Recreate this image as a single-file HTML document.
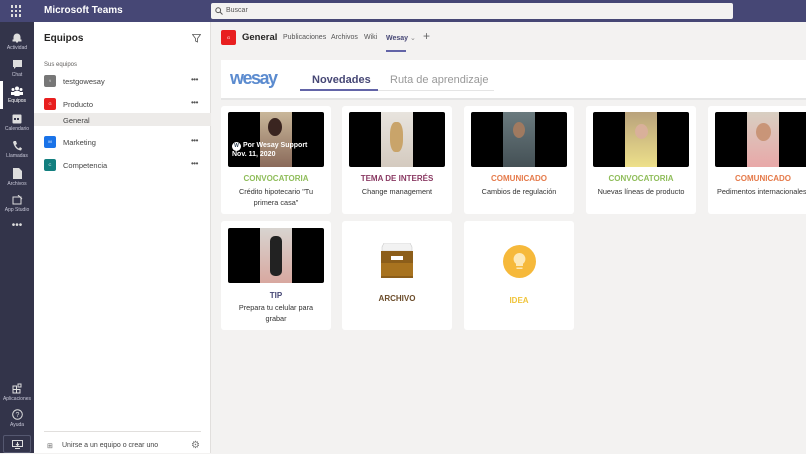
<!DOCTYPE html>
<html><head><meta charset="utf-8"><style>
*{box-sizing:border-box;margin:0;padding:0}
body{width:806px;height:453px;overflow:hidden;font-family:"Liberation Sans",sans-serif;background:#f3f2f1;position:relative}
.abs{position:absolute}
#top{left:0;top:0;width:806px;height:22px;background:#464775}
#rail{left:0;top:22px;width:34px;height:431px;background:#33344a}
.ri{position:absolute;left:0;width:34px;text-align:center;color:#c8c8d8;font-size:5px}
.ri svg{display:block;margin:0 auto 2px}
#side{left:34px;top:22px;width:177px;height:431px;background:#fff;border-right:1px solid #e1dfdd}
.team{position:absolute;left:10px;font-size:7.5px;color:#444}
.av{position:absolute;left:0;top:0;width:12px;height:12px;border-radius:2px;color:#fff;font-size:4px;text-align:center;line-height:12px}
.team span{position:absolute;left:19px;top:2px;white-space:nowrap}
.dots{position:absolute;left:157px;font-size:8px;color:#555;letter-spacing:-0.5px}
.card{position:absolute;width:110px;background:#fff;border-radius:3px;text-align:center}
.vid{position:absolute;left:7px;top:6px;width:96px;height:55px;background:#000;border-radius:2px;overflow:hidden}
.vid i{position:absolute;left:32px;top:0;width:32px;height:55px}
.cat{position:absolute;left:0;width:110px;top:68px;font-size:8px;font-weight:bold}
.sub{position:absolute;left:12px;width:86px;top:80px;font-size:7.3px;color:#333;line-height:11px}
.nw{left:0;width:110px;white-space:nowrap}
</style></head><body>
<div id="top" class="abs">
 <div class="abs" style="left:11px;top:5px;width:12px;height:12px;display:grid;grid-template-columns:repeat(3,2px);gap:2px">
  <b style="background:#ddd"></b><b style="background:#ddd"></b><b style="background:#ddd"></b><b style="background:#ddd"></b><b style="background:#ddd"></b><b style="background:#ddd"></b><b style="background:#ddd"></b><b style="background:#ddd"></b><b style="background:#ddd"></b></div>
 <div class="abs" style="left:44px;top:5px;color:#fff;font-size:10px;font-weight:bold">Microsoft Teams</div>
 <div class="abs" style="left:211px;top:3px;width:522px;height:16px;background:#f3f2f1;border-radius:2px;font-size:7px;color:#555;padding:4px 0 0 15px">Buscar
  <svg class="abs" style="left:4px;top:4px" width="8" height="8" viewBox="0 0 8 8"><circle cx="3.2" cy="3.2" r="2.4" fill="none" stroke="#555" stroke-width="1"/><path d="M5 5 L7.5 7.5" stroke="#555"/></svg></div>
</div>
<div id="rail" class="abs">
 <div class="ri" style="top:10px"><svg width="10" height="11" viewBox="0 0 10 11"><path d="M2 8 V5 a3 3 0 0 1 6 0 V8 H9 V9 H1 V8Z M4 10 h2" fill="#ddd" stroke="#ddd"/></svg>Actividad</div>
 <div class="ri" style="top:37px"><svg width="11" height="11" viewBox="0 0 11 11"><path d="M1 1 H10 V8 H4 L2 10 V8 H1Z" fill="#ddd"/></svg>Chat</div>
 <div class="abs" style="left:0;top:59px;width:3px;height:28px;background:#fff"></div>
 <div class="ri" style="top:64px;color:#fff"><svg width="12" height="10" viewBox="0 0 12 10"><circle cx="6" cy="2.5" r="2" fill="#fff"/><circle cx="2" cy="3.5" r="1.5" fill="#fff"/><circle cx="10" cy="3.5" r="1.5" fill="#fff"/><rect x="3" y="5" width="6" height="5" rx="1.5" fill="#fff"/><rect x="0" y="6" width="3" height="3" fill="#fff"/><rect x="9" y="6" width="3" height="3" fill="#fff"/></svg>Equipos</div>
 <div class="ri" style="top:92px"><svg width="10" height="10" viewBox="0 0 10 10"><rect x="0.5" y="0.5" width="9" height="9" rx="1" fill="#ddd"/><rect x="2" y="4" width="2" height="2" fill="#33344a"/><rect x="5" y="4" width="2" height="2" fill="#33344a"/></svg>Calendario</div>
 <div class="ri" style="top:118px"><svg width="10" height="11" viewBox="0 0 10 11"><path d="M2 1 L4 1 L5 4 L3.5 5 Q5 8 7 8.5 L8 7 L10 8.5 L9 10.5 Q3 10 1 2Z" fill="#ddd"/></svg>Llamadas</div>
 <div class="ri" style="top:146px"><svg width="9" height="11" viewBox="0 0 9 11"><path d="M0 0 H6 L9 3 V11 H0Z" fill="#ddd"/></svg>Archivos</div>
 <div class="ri" style="top:173px"><svg width="11" height="10" viewBox="0 0 11 10"><rect x="1" y="2" width="8" height="7" fill="none" stroke="#ddd"/><path d="M6 0 L10 4" stroke="#ddd"/></svg>App Studio</div>
 <div class="ri" style="top:198px;font-size:10px;color:#ddd">•••</div>
 <div class="ri" style="top:361px"><svg width="11" height="11" viewBox="0 0 11 11"><rect x="1" y="3" width="3.5" height="3.5" fill="none" stroke="#ddd"/><rect x="1" y="6.5" width="3.5" height="3.5" fill="none" stroke="#ddd"/><rect x="4.5" y="6.5" width="3.5" height="3.5" fill="none" stroke="#ddd"/><rect x="6" y="1" width="3" height="3" fill="none" stroke="#ddd"/></svg>Aplicaciones</div>
 <div class="ri" style="top:387px"><svg width="11" height="11" viewBox="0 0 11 11"><circle cx="5.5" cy="5.5" r="4.8" fill="none" stroke="#ddd"/><text x="5.5" y="8" font-size="7" fill="#ddd" text-anchor="middle" font-family="Liberation Sans">?</text></svg>Ayuda</div>
 <div class="abs" style="left:3px;top:413px;width:28px;height:18px;border:1px solid #555870;border-radius:2px"><svg style="margin:4px 0 0 8px" width="11" height="9" viewBox="0 0 11 9"><rect x="0.5" y="0.5" width="10" height="6" fill="none" stroke="#ddd"/><path d="M5.5 2 V5 M4 4 L5.5 5.5 L7 4 M3 8.5 H8" stroke="#ddd" fill="none"/></svg></div>
</div>
<div id="side" class="abs">
 <div class="abs" style="left:10px;top:11px;font-size:10px;font-weight:bold;color:#252423">Equipos</div>
 <svg class="abs" style="left:158px;top:12px" width="9" height="9" viewBox="0 0 9 9"><path d="M0.5 0.5 H8.5 L5.5 4.5 V8 L3.5 7 V4.5Z" fill="none" stroke="#555" stroke-width="0.8"/></svg>
 <div class="abs" style="left:10px;top:40px;font-size:6px;color:#605e5c">Sus equipos</div>
 <div class="team" style="top:53px"><div class="av" style="background:#777">t</div><span>testgowesay</span></div><div class="dots" style="top:53px">•••</div>
 <div class="team" style="top:76px"><div class="av" style="background:#e81f1f">G</div><span>Producto</span></div><div class="dots" style="top:76px">•••</div>
 <div class="abs" style="left:0;top:91px;width:177px;height:13px;background:#edebe9"></div>
 <div class="abs" style="left:29px;top:94px;font-size:7.5px;color:#444">General</div>
 <div class="team" style="top:114px"><div class="av" style="background:#1a73e8">M</div><span>Marketing</span></div><div class="dots" style="top:114px">•••</div>
 <div class="team" style="top:137px"><div class="av" style="background:#137f7f">C</div><span>Competencia</span></div><div class="dots" style="top:137px">•••</div>
 <div class="abs" style="left:10px;top:409px;width:157px;height:1px;background:#e1dfdd"></div>
 <div class="abs" style="left:13px;top:420px;font-size:7px;color:#666">⊞</div>
 <div class="abs" style="left:28px;top:420px;font-size:7px;color:#444">Unirse a un equipo o crear uno</div>
 <div class="abs" style="left:157px;top:418px;font-size:10px;color:#777">⚙</div>
</div>
<div class="abs" style="left:221px;top:30px;width:15px;height:15px;background:#e81f1f;border-radius:2px;color:#fff;font-size:4px;text-align:center;line-height:15px">G</div>
<div class="abs" style="left:242px;top:32px;font-size:9.5px;font-weight:bold;color:#252423">General</div>
<div class="abs" style="left:283px;top:34px;font-size:7px;color:#555">Publicaciones</div>
<div class="abs" style="left:331px;top:34px;font-size:7px;color:#555">Archivos</div>
<div class="abs" style="left:364px;top:34px;font-size:7px;color:#555">Wiki</div>
<div class="abs" style="left:386px;top:34px;font-size:7px;color:#464775;font-weight:bold">Wesay <span style="font-weight:normal;color:#888">⌄</span></div>
<div class="abs" style="left:386px;top:50px;width:20px;height:2px;background:#6264a7"></div>
<div class="abs" style="left:423px;top:29px;font-size:12px;color:#666">+</div>
<div class="abs" style="left:221px;top:60px;width:585px;height:40px;background:#fff;border-bottom:2px solid #e5e5e5"></div>
<div class="abs" style="left:230px;top:68px;font-size:18px;font-weight:bold;color:#5b8bcf;letter-spacing:-1.5px">wesay</div>
<div class="abs" style="left:312px;top:74px;font-size:11px;font-weight:bold;color:#464775">Novedades</div>
<div class="abs" style="left:300px;top:89px;width:78px;height:2px;background:#6264a7"></div>
<div class="abs" style="left:378px;top:90px;width:116px;height:1px;background:#e5e5e5"></div>
<div class="abs" style="left:390px;top:74px;font-size:11px;color:#999">Ruta de aprendizaje</div>
<div class="card" style="left:221px;top:106px;height:108px"><div class="vid"><i style="background:linear-gradient(#c9b79a,#8a6a5a)"></i><b style="position:absolute;left:40px;top:6px;width:14px;height:18px;border-radius:50%;background:#3a2520"></b><div style="position:absolute;left:4px;top:30px;color:#fff;font-size:7px;font-weight:bold;text-align:left"><span style="display:inline-block;width:9px;height:9px;border-radius:50%;background:#fff;color:#345;font-size:5px;text-align:center;line-height:9px">W</span> Por Wesay Support<br>Nov. 11, 2020</div></div><div class="cat" style="color:#8fbd5a">CONVOCATORIA</div><div class="sub">Crédito hipotecario "Tu primera casa"</div></div>
<div class="card" style="left:342px;top:106px;height:108px"><div class="vid"><i style="background:linear-gradient(#e8e4de,#d4cabf)"></i><b style="position:absolute;left:41px;top:10px;width:13px;height:30px;border-radius:40%;background:#c9a46a"></b></div><div class="cat" style="color:#8a3a63">TEMA DE INTERÉS</div><div class="sub nw">Change management</div></div>
<div class="card" style="left:464px;top:106px;height:108px"><div class="vid"><i style="background:linear-gradient(#6a7a7e,#445055)"></i><b style="position:absolute;left:42px;top:10px;width:12px;height:16px;border-radius:50%;background:#a07a60"></b></div><div class="cat" style="color:#e57a4a">COMUNICADO</div><div class="sub nw">Cambios de regulación</div></div>
<div class="card" style="left:586px;top:106px;height:108px"><div class="vid"><i style="background:linear-gradient(#b9a27c,#ede08a)"></i><b style="position:absolute;left:42px;top:12px;width:13px;height:15px;border-radius:50%;background:#d9b09a"></b></div><div class="cat" style="color:#8fbd5a">CONVOCATORIA</div><div class="sub nw">Nuevas líneas de producto</div></div>
<div class="card" style="left:708px;top:106px;height:108px"><div class="vid"><i style="background:linear-gradient(#d8cfc2,#e8a8a8)"></i><b style="position:absolute;left:41px;top:11px;width:15px;height:18px;border-radius:50%;background:#c99578"></b></div><div class="cat" style="color:#e57a4a">COMUNICADO</div><div class="sub" style="white-space:nowrap;left:9px;text-align:left">Pedimentos internacionales</div></div>
<div class="card" style="left:221px;top:221px;height:109px"><div class="vid" style="top:7px"><i style="background:linear-gradient(#d8d4d0,#d8a8a0)"></i><b style="position:absolute;left:42px;top:8px;width:12px;height:40px;border-radius:5px;background:#222"></b></div><div class="cat" style="color:#464775;top:70px">TIP</div><div class="sub" style="top:81px">Prepara tu celular para grabar</div></div>
<div class="card" style="left:342px;top:221px;height:109px"><svg class="abs" style="left:39px;top:22px" width="32" height="35" viewBox="0 0 32 35"><path d="M3 0 H29 L31 4 V8 H1 V4Z" fill="#f2f2f2" stroke="#ccc" stroke-width="0.6"/><rect x="0" y="8" width="32" height="27" fill="#8c5e1a"/><rect x="0" y="20" width="32" height="13" fill="#a8731f"/><rect x="10" y="13" width="12" height="4" fill="#fff"/></svg><div class="cat" style="color:#6b4c2a;top:73px">ARCHIVO</div></div>
<div class="card" style="left:464px;top:221px;height:109px"><svg class="abs" style="left:39px;top:24px" width="33" height="33" viewBox="0 0 33 33"><circle cx="16.5" cy="16.5" r="16.5" fill="#f6b93b"/><path d="M16.5 8 a6 6 0 0 1 3.5 10.8 V21 H13 V18.8 A6 6 0 0 1 16.5 8Z M13.5 22.5 H19.5 V24 H13.5Z" fill="#fde9b8"/></svg><div class="cat" style="color:#f0c43a;top:75px">IDEA</div></div>
</body></html>
